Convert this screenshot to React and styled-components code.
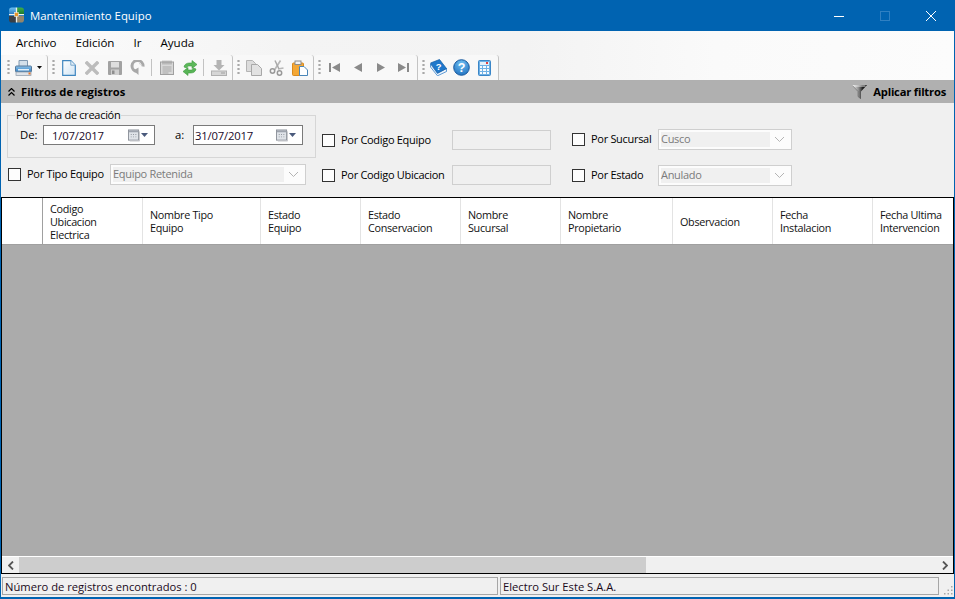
import React from 'react';
import styled, { createGlobalStyle } from 'styled-components';

const Global = createGlobalStyle`
  html, body { margin: 0; padding: 0; background: #f0f0f0; }
  * { box-sizing: border-box; }
  body { font-family: "Open Sans", "Liberation Sans", sans-serif; font-size: 11.3px; color: #000; }
`;

const Win = styled.div`
  width: 955px; height: 599px; overflow: hidden;
  display: flex; flex-direction: column;
  border: 1px solid #0063b1; border-top: 0; border-bottom-width: 2px;
  background: #f0f0f0;
`;
const TitleBar = styled.header`
  height: 31px; flex: none; margin: 0 -1px; padding: 0 1px 0 9px;
  background: #0063b1; color: #fff;
  display: flex; align-items: center; gap: 6px;
  font-size: 11.4px;
`;
const Caption = styled.span`flex: 1;`;
const LogoWrap = styled.span`display: flex; margin-bottom: 2px;`;
const WinButton = styled.div`
  width: 46px; height: 31px; display: flex; align-items: center; justify-content: center;
`;
const WinButtons = styled.div`display: flex;`;

const Menu = styled.nav`
  height: 24px; flex: none; padding: 0 0 2px 15px;
  display: flex; align-items: center; gap: 19px;
  font-size: 11.6px;
  background: linear-gradient(90deg, #fcfcfc, #f4f4f4 30%, #f3f3f3 55%, #fafafa 75%, #fcfcfc);
`;
const ToolBar = styled.div`
  height: 25px; flex: none; padding-left: 2px; display: flex;
  background: linear-gradient(90deg, #f5f5f5, #f3f3f3 55%, #fafafa 75%, #fcfcfc);
`;
const ToolGroup = styled.div`
  height: 25px; padding: 0 2px 0 4px;
  display: flex; align-items: center;
  background: #f8f8f8; border-radius: 3px 3px 0 0;
  border-right: 1px solid #c4c4c4;
`;
const Grip = styled.i`
  width: 3px; height: 17px; margin-right: ${p => p.$gap ?? 2}px; flex: none;
  background: radial-gradient(circle, #a8a8a8 1px, transparent 1.3px) 0 0 / 3px 4px;
`;
const Slot = styled.div`
  width: ${p => p.$w || 23}px; height: 22px; flex: none;
  display: flex; align-items: center; justify-content: ${p => p.$start ? 'flex-start' : 'center'};
`;
const Sep = styled.i`width: 1px; height: 17px; background: #c2c2c2; margin: 0 3px 0 2px; flex: none;`;

const FilterHead = styled.div`
  height: 23px; flex: none; padding: 0 8px 0 7px;
  display: flex; align-items: center; background: #b0b0b0;
  font-weight: 700; font-size: 11.2px; color: #000;
`;
const HeadTitle = styled.span`flex: 1; margin-left: 6px;`;
const HeadAction = styled.span`display: flex; align-items: center; gap: 6px; letter-spacing: -0.2px;`;

const Filters = styled.section`
  height: 94px; flex: none; padding: 4px 0 0 6px;
  display: grid; grid-template-columns: 315px 250px 1fr;
  grid-template-rows: 51px 22px; row-gap: 6px;
`;
const Group = styled.fieldset`
  margin: 0; width: 309px; height: 51px; padding: 2px 0 0 12px;
  border: 1px solid #d6d6d6; border-radius: 0;
  display: flex; align-items: flex-start;
`;
const Legend = styled.legend`
  padding: 0 1px; margin-left: -5px; line-height: 16px; font-size: 11px; letter-spacing: -0.3px;
`;
const DateLabel = styled.span`width: ${p => p.$w}px; margin-left: ${p => p.$ml || 0}px; line-height: 19px; flex: none;`;
const DateBox = styled.div`
  width: ${p => p.$w}px; height: 20px; padding-left: ${p => p.$pl}px; padding-right: 6px;
  background: #fff; border: 1px solid #7a7a7a; color: #1a0a2a; letter-spacing: -0.2px;
  display: flex; align-items: center; justify-content: space-between; flex: none;
`;
const Field = styled.div`
  display: flex; align-items: center; align-self: ${p => p.$self || 'center'};
  margin-bottom: ${p => p.$mb || 0}px;
`;
const Box = styled.span`
  width: 13px; height: 13px; border: 1px solid #333; background: #fdfdfd; flex: none;
  margin-left: ${p => p.$ml || 0}px;
`;
const Label = styled.span`
  width: ${p => p.$w}px; margin-left: 6px; padding-bottom: 2px; flex: none; white-space: nowrap;
  font-size: 11px; letter-spacing: -0.3px;
`;
const TextBox = styled.div`
  width: 99px; height: 20px; background: #f0f0f0; border: 1px solid #cfcfcf;
`;
const Combo = styled.div`
  width: ${p => p.$w}px; height: 21px; padding: 2px; background: #fcfcfc; border: 1px solid #cfcfcf;
  display: flex; align-items: stretch; color: #7b7b7b;
`;
const ComboText = styled.span`
  flex: 1; background: #f0f0f0; padding-bottom: 2px; display: flex; align-items: center;
  font-size: 11px; letter-spacing: -0.3px;
`;
const ComboArrow = styled.span`width: 19px; display: flex; align-items: center; justify-content: center;`;
const CalWrap = styled.span`display: flex; align-items: center; gap: 1px;`;

const Grid = styled.main`
  flex: 1; min-height: 0; border: 1px solid #000; display: flex; flex-direction: column; background: #ababab;
  overflow: hidden;
`;
const HeadRow = styled.div`
  height: 47px; flex: none; display: flex; background: #fff; border-bottom: 1px solid #a0a0a0; overflow: hidden;
`;
const HeadCell = styled.div`
  width: ${p => p.$w}px; flex: none; padding-left: 7px;
  display: flex; align-items: center;
  line-height: 13px; font-size: 10.8px; letter-spacing: -0.3px; color: #111; white-space: pre-line;
  border-right: ${p => p.$dark ? '1px solid #a0a0a0' : '1px solid #e3e3e3'};
`;
const GridBody = styled.div`flex: 1;`;
const HScroll = styled.div`
  height: 17px; flex: none; border-top: 1px solid #fff; background: #f0f0f0; display: flex;
`;
const ScrollBtn = styled.div`width: 17px; display: flex; align-items: center; justify-content: center; flex: none;`;
const Thumb = styled.div`width: 627px; background: #cdcdcd; flex: none;`;
const Track = styled.div`flex: 1;`;

const Status = styled.footer`
  height: 23px; flex: none; padding: 3px 0 2px 1px; display: flex; gap: 2px; background: #f0f0f0;
`;
const Panel = styled.div`
  width: ${p => p.$w}px; border: 1px solid #a6a6a6; padding-left: 2px; display: flex; align-items: center; color: #1a0a1a; font-size: 11.2px;
`;
const GripCorner = styled.div`flex: 1; display: flex; align-items: flex-end; justify-content: flex-end; padding-right: 1px;`;

const Chevron = () => (
  <svg width="11" height="7" viewBox="0 0 11 7"><path d="M1 1l4.500 4.500L10 1" fill="none" stroke="#b4b4b4" strokeWidth="1"/></svg>
);
const CalIcon = () => (
  <CalWrap>
    <svg width="12" height="13" viewBox="0 0 13 13">
      <rect x=".5" y=".5" width="11" height="11" fill="#dfe3e8" stroke="#8a8f98" />
      <rect x="1" y="1" width="10" height="2" fill="#9da3ad" />
      <path d="M3 5h1v1H3zM5.500 5h1v1h-1zM8 5h1v1H8zM3 7.500h1v1H3zM5.500 7.500h1v1h-1zM8 7.500h1v1H8z" fill="#8f949c" />
      <path d="M12.500 2v10.500H2" stroke="#c4c6ca" fill="none" />
    </svg>
    <svg width="7" height="4" viewBox="0 0 7 4"><path d="M0 0h7L3.500 4z" fill="#4a5a7c" /></svg>
  </CalWrap>
);

const Logo = () => (
  <LogoWrap>
    <svg width="15" height="16" viewBox="0 0 16 17">
      <defs>
        <linearGradient id="lb" x1="0" y1="0" x2="0" y2="1"><stop offset="0" stopColor="#6cc0f0"/><stop offset="1" stopColor="#2b7cc4"/></linearGradient>
        <linearGradient id="lg" x1="0" y1="0" x2="0" y2="1"><stop offset="0" stopColor="#3fae4a"/><stop offset="1" stopColor="#1c7a30"/></linearGradient>
      </defs>
      <path d="M3 .5h4.500v7H0V3.500A3 3 0 0 1 3 .5z" fill="url(#lb)" />
      <path d="M8.500.5H13a3 3 0 0 1 3 3V7.500H8.500z" fill="url(#lg)" />
      <path d="M0 9.500h7.500v7H3a3 3 0 0 1-3-3z" fill="#3a3f46" />
      <path d="M8.500 9.500H16v4a3 3 0 0 1-3 3H8.500z" fill="#94856a" />
      <path d="M7.300.5h1.400V7.300H16v1.400H8.700v7.800H7.300V8.700H0V7.300h7.300z" fill="#eef2ee" />
      <rect x="6" y="6" width="4" height="4" fill="#e8952a" stroke="#f6efe0" strokeWidth=".6" />
    </svg>
  </LogoWrap>
);

const Printer = () => (
  <svg width="17" height="16" viewBox="0 0 17 16">
    <defs><linearGradient id="pb" x1="0" y1="0" x2="0" y2="1"><stop offset="0" stopColor="#8fc2e8"/><stop offset="1" stopColor="#2f7fc4"/></linearGradient></defs>
    <path d="M4 .5h8.500v6H4z" fill="#d4e0ea" stroke="#8098b0" />
    <rect x=".5" y="6" width="16" height="6" rx="1" fill="url(#pb)" stroke="#56789a" />
    <rect x="1" y="12" width="15" height="3.500" fill="#dde2e8" stroke="#8b98a6" strokeWidth=".7" />
    <rect x="3" y="9" width="11" height="1.500" fill="#e6f0f8" />
    <rect x="13.500" y="12.500" width="2" height="2" fill="#e8742a" />
  </svg>
);
const Caret = () => <svg width="5" height="3" viewBox="0 0 5 3" style={{ marginLeft: 5 }}><path d="M0 0h5L2.500 3z" fill="#111" /></svg>;
const NewDoc = () => (
  <svg width="14" height="16" viewBox="0 0 14 16">
    <defs><linearGradient id="nd" x1="0" y1="0" x2="1" y2="1"><stop offset="0" stopColor="#fff"/><stop offset="1" stopColor="#cfe3f3"/></linearGradient></defs>
    <path d="M.7.7h8.100l4.500 4.500v10.100H.7z" fill="url(#nd)" stroke="#3f86bf" strokeWidth="1.200" />
    <path d="M8.800.7v4.500h4.500" fill="#e6f0f8" stroke="#7aa8cc" />
  </svg>
);
const XIcon = () => (
  <svg width="14" height="14" viewBox="0 0 14 14"><path d="M2 2l10 10M12 2L2 12" stroke="#bcbcbc" strokeWidth="3.400" strokeLinecap="square" /></svg>
);
const Save = () => (
  <svg width="14" height="14" viewBox="0 0 14 14">
    <rect width="14" height="14" rx="1" fill="#a2a2a2" />
    <rect x="3" y="1" width="8" height="5.500" fill="#dedede" />
    <rect x="3" y="8.500" width="8" height="5.500" fill="#cfcfcf" />
    <rect x="4" y="9.500" width="2.500" height="3.500" fill="#8e8e8e" />
  </svg>
);
const Redo = () => (
  <svg width="15" height="16" viewBox="0 0 15 16">
    <path d="M13 6.500A5.500 5.500 0 1 0 7 11.500" fill="none" stroke="#a8a8a8" strokeWidth="3" />
    <path d="M3.500 10.500L8.500 7.500V15z" fill="#a8a8a8" />
    <path d="M9 3.500a4 4 0 0 1 3 2" stroke="#d0d0d0" strokeWidth="1" fill="none" />
  </svg>
);
const Note = () => (
  <svg width="14" height="15" viewBox="0 0 14 15">
    <rect x=".5" y="2" width="13" height="12.500" fill="#d8d8d8" stroke="#a0a0a0" />
    <path d="M3 4.500V.5M5 4.500V.5M7 4.500V.5M9 4.500V.5M11 4.500V.5" stroke="#9a9a9a" strokeWidth="1" />
    <path d="M2.500 7h9M2.500 9h9M2.500 11h9M2.500 13h6" stroke="#a8a8a8" />
  </svg>
);
const Refresh = () => (
  <svg width="16" height="16" viewBox="0 0 16 16">
    <path d="M2 7C2.500 4 5 3 7.500 3H10V.5L15 4.500 10 8.500V6H7.500C6 6 5 6.500 4.500 8z" fill="#5cb85a" stroke="#3c9a3c" strokeWidth=".6" />
    <path d="M14 9C13.500 12 11 13 8.500 13H6v2.500L1 11.500 6 7.500V10h2.500c1.500 0 2.500-.5 3-2z" fill="#58b456" stroke="#3c9a3c" strokeWidth=".6" />
  </svg>
);
const Download = () => (
  <svg width="16" height="16" viewBox="0 0 16 16">
    <path d="M5.500 0h5v5h3L8 10.500 2.500 5h3z" fill="#b4b4b4" />
    <rect x=".5" y="11" width="15" height="4.500" fill="#d6d6d6" stroke="#b0b0b0" />
    <rect x="10" y="12.500" width="4" height="1" fill="#a0a0a0" />
  </svg>
);
const Copy = () => (
  <svg width="16" height="16" viewBox="0 0 16 16">
    <path d="M.5.500h6l3 3v8h-9z" fill="#dcdcdc" stroke="#b4b4b4" />
    <path d="M5.500 4.500h6l4 4v7h-10z" fill="#e2e2e2" stroke="#a8a8a8" />
  </svg>
);
const Scissors = () => (
  <svg width="16" height="16" viewBox="0 0 16 16">
    <path d="M11.500.5L5.500 10M9 9l5.500-1" stroke="#b8b8b8" strokeWidth="1.700" fill="none" />
    <path d="M6 .5L10 9" stroke="#a8a8a8" strokeWidth="1.500" fill="none" />
    <circle cx="3.500" cy="11" r="2.200" fill="none" stroke="#999" strokeWidth="1.500" />
    <circle cx="10.500" cy="13" r="2.200" fill="none" stroke="#999" strokeWidth="1.500" />
  </svg>
);
const Paste = () => (
  <svg width="16" height="16" viewBox="0 0 16 16">
    <rect x=".5" y="3" width="11" height="12.500" rx="1" fill="#f4a836" stroke="#d98a1e" />
    <rect x="3" y="1" width="6" height="3.500" fill="#f4f4f4" stroke="#8c8c8c" />
    <path d="M7.500 6.500h4.500l3.500 3.500v5.500h-8z" fill="#fff" stroke="#4a86b8" />
  </svg>
);
const Nav = ({ d, w = 11 }) => <svg width={w} height="9" viewBox={`0 0 ${w} 9`}><path d={d} fill="#8a8a8a" /></svg>;
const Book = () => (
  <svg width="17" height="17" viewBox="0 0 17 17">
    <path d="M.5 5L7.500 14.500 16.500 9.500V12.500L7.500 16.800.5 8z" fill="#f2f6fa" stroke="#1a70c4" strokeWidth=".7" />
    <path d="M.5 4L9.500 .5 16.500 9.500 7.500 14z" fill="#1e78cc" stroke="#0f5aa4" strokeWidth=".7" />
    <text x="8.600" y="10.500" fontFamily="Liberation Sans" fontWeight="700" fontSize="9.500" fill="#fff" textAnchor="middle">?</text>
  </svg>
);
const Help = () => (
  <svg width="17" height="17" viewBox="0 0 17 17">
    <defs><radialGradient id="hb" cx=".5" cy=".25" r=".9"><stop offset="0" stopColor="#6fc0f2"/><stop offset="1" stopColor="#1565b8"/></radialGradient></defs>
    <circle cx="8.500" cy="8.500" r="7.800" fill="url(#hb)" stroke="#1a5a9e" />
    <text x="8.500" y="13" fontFamily="Liberation Sans" fontWeight="700" fontSize="12.500" fill="#fff" textAnchor="middle">?</text>
  </svg>
);
const Calc = () => (
  <svg width="13" height="16" viewBox="0 0 13 16">
    <rect x=".5" y=".5" width="12" height="15" rx="1" fill="#6fb0e4" stroke="#3a86c8" />
    <rect x="2" y="2" width="9" height="3" fill="#e4f0fa" />
    <rect x="8" y="2" width="2" height="2" fill="#e04040" />
    <path d="M2 6h2v2H2zM5 6h3v2H5zM9 6h2v2H9zM2 9h2v2H2zM5 9h3v2H5zM9 9h2v2H9zM2 12h2v2H2zM5 12h3v2H5zM9 12h2v2H9z" fill="#f6fafe" />
  </svg>
);
const Funnel = () => (
  <svg width="15" height="14" viewBox="0 0 15 14">
    <defs><linearGradient id="fg" x1="0" y1="0" x2="1" y2="0"><stop offset="0" stopColor="#ffffff"/><stop offset=".45" stopColor="#8a8a8a"/><stop offset=".7" stopColor="#222"/><stop offset="1" stopColor="#000"/></linearGradient></defs>
    <path d="M0 0h15L9 6.500V14L6 11.500v-5z" fill="url(#fg)" />
    <path d="M1.500 1h12" stroke="#e8e8e8" strokeWidth="1" />
    <path d="M.5 .5L6 6.500V11.500L9 14" fill="none" stroke="#555" strokeWidth=".5" />
  </svg>
);
const DoubleUp = () => (
  <svg width="7" height="8" viewBox="0 0 7 8"><path d="M.5 3.500l3-3 3 3M.5 7.500l3-3 3 3" fill="none" stroke="#000" strokeWidth="1.200" /></svg>
);
const Arrow = ({ d }) => <svg width="6" height="9" viewBox="0 0 6 9"><path d={d} fill="none" stroke="#555" strokeWidth="1.800" /></svg>;

const columns = [
  { w: 41, t: '', dark: true },
  { w: 100, t: 'Codigo\nUbicacion\nElectrica' },
  { w: 118, t: 'Nombre Tipo\nEquipo' },
  { w: 100, t: 'Estado\nEquipo' },
  { w: 100, t: 'Estado\nConservacion' },
  { w: 100, t: 'Nombre\nSucursal' },
  { w: 112, t: 'Nombre\nPropietario' },
  { w: 100, t: 'Observacion' },
  { w: 100, t: 'Fecha\nInstalacion' },
  { w: 100, t: 'Fecha Ultima\nIntervencion' },
];

export default function App() {
  return (
    <>
      <Global />
      <Win>
        <TitleBar>
          <Logo />
          <Caption>Mantenimiento Equipo</Caption>
          <WinButtons>
            <WinButton><svg width="10" height="10" viewBox="0 0 10 10"><path d="M0 5.500h10" stroke="#fff" /></svg></WinButton>
            <WinButton><svg width="10" height="10" viewBox="0 0 10 10"><rect x=".5" y=".5" width="9" height="9" fill="none" stroke="#2f80c2" /></svg></WinButton>
            <WinButton><svg width="10" height="10" viewBox="0 0 10 10"><path d="M0 0l10 10M10 0L0 10" stroke="#fff" /></svg></WinButton>
          </WinButtons>
        </TitleBar>
        <Menu>
          <span>Archivo</span><span>Edición</span><span>Ir</span><span>Ayuda</span>
        </Menu>
        <ToolBar>
          <ToolGroup>
            <Grip $gap={5} />
            <Slot $w={30} $start><Printer /><Caret /></Slot>
          </ToolGroup>
          <ToolGroup>
            <Grip />
            <Slot><NewDoc /></Slot><Slot><XIcon /></Slot><Slot><Save /></Slot><Slot><Redo /></Slot>
            <Sep />
            <Slot><Note /></Slot><Slot><Refresh /></Slot>
            <Sep />
            <Slot><Download /></Slot>
          </ToolGroup>
          <ToolGroup>
            <Grip />
            <Slot><Copy /></Slot><Slot><Scissors /></Slot><Slot><Paste /></Slot>
          </ToolGroup>
          <ToolGroup>
            <Grip />
            <Slot><Nav d="M0 0h2v9H0zM11 0v9L3 4.500z" /></Slot>
            <Slot><Nav w={8} d="M8 0v9L0 4.500z" /></Slot>
            <Slot><Nav w={8} d="M0 0v9l8-4.500z" /></Slot>
            <Slot><Nav d="M0 0v9l8-4.500zM9 0h2v9H9z" /></Slot>
          </ToolGroup>
          <ToolGroup>
            <Grip />
            <Slot><Book /></Slot><Slot><Help /></Slot><Slot><Calc /></Slot>
          </ToolGroup>
        </ToolBar>
        <FilterHead>
          <DoubleUp />
          <HeadTitle>Filtros de registros</HeadTitle>
          <HeadAction><Funnel />Aplicar filtros</HeadAction>
        </FilterHead>
        <Filters>
          <Group>
            <Legend>Por fecha de creación</Legend>
            <DateLabel $w={23}>De:</DateLabel>
            <DateBox $w={112} $pl={8}>1/07/2017<CalIcon /></DateBox>
            <DateLabel $w={18} $ml={20}>a:</DateLabel>
            <DateBox $w={110} $pl={1}>31/07/2017<CalIcon /></DateBox>
          </Group>
          <Field $self="end" $mb={8}>
            <Box /><Label $w={111}>Por Codigo Equipo</Label><TextBox />
          </Field>
          <Field $self="end" $mb={8}>
            <Box /><Label $w={67}>Por Sucursal</Label>
            <Combo $w={134}><ComboText>Cusco</ComboText><ComboArrow><Chevron /></ComboArrow></Combo>
          </Field>
          <Field $self="start">
            <Box $ml={1} /><Label $w={83}>Por Tipo Equipo</Label>
            <Combo $w={196}><ComboText>Equipo Retenida</ComboText><ComboArrow><Chevron /></ComboArrow></Combo>
          </Field>
          <Field>
            <Box /><Label $w={111}>Por Codigo Ubicacion</Label><TextBox />
          </Field>
          <Field $self="end">
            <Box /><Label $w={67}>Por Estado</Label>
            <Combo $w={134}><ComboText>Anulado</ComboText><ComboArrow><Chevron /></ComboArrow></Combo>
          </Field>
        </Filters>
        <Grid>
          <HeadRow>
            {columns.map((c, i) => <HeadCell key={i} $w={c.w} $dark={c.dark}>{c.t}</HeadCell>)}
          </HeadRow>
          <GridBody />
          <HScroll>
            <ScrollBtn><Arrow d="M5 .5l-4 4 4 4" /></ScrollBtn>
            <Thumb />
            <Track />
            <ScrollBtn><Arrow d="M1 .5l4 4-4 4" /></ScrollBtn>
          </HScroll>
        </Grid>
        <Status>
          <Panel $w={496}>Número de registros encontrados : 0</Panel>
          <Panel $w={439}>Electro Sur Este S.A.A.</Panel>
          <GripCorner>
            <svg width="11" height="10" viewBox="0 0 11 10">
              <path d="M9 1h1.500v1.500H9zM5.500 4.500H7V6H5.500zM9 4.500h1.500V6H9zM2 8h1.500v1.500H2zM5.500 8H7v1.500H5.500zM9 8h1.500v1.500H9z" fill="#a8a8a8" />
            </svg>
          </GripCorner>
        </Status>
      </Win>
    </>
  );
}
